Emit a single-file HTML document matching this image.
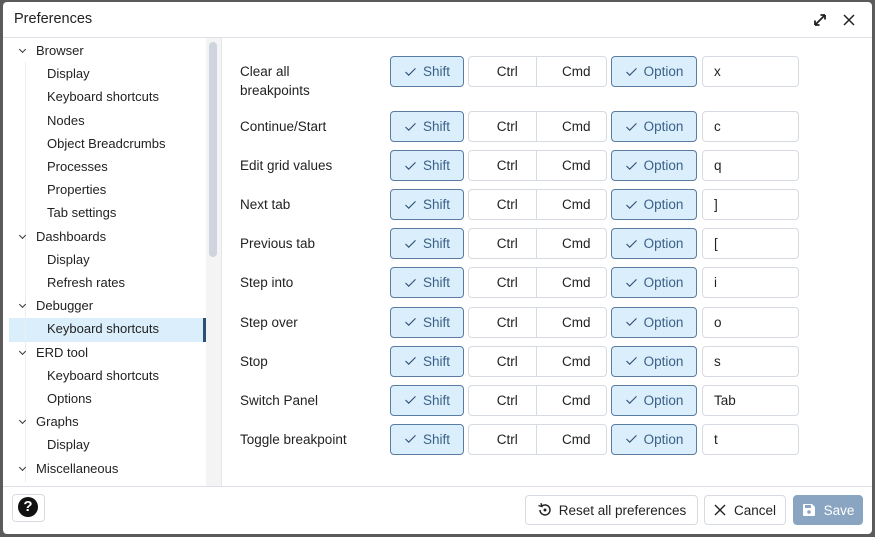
<!DOCTYPE html>
<html><head><style>
*{box-sizing:border-box;margin:0;padding:0}
body{width:875px;height:537px;background:#5b5b5b;font-family:"Liberation Sans",sans-serif;overflow:hidden;position:relative;color:#222}
.dlg{position:absolute;left:3px;top:2px;width:869px;height:532px;background:#fff;border-radius:4px;overflow:hidden}
.a{position:absolute}
.title{left:11px;top:9px;font-size:14.5px;color:#222}
.hdr{left:0;top:35px;width:869px;height:1px;background:#dde0e6}
.ti{position:absolute;font-size:13px;color:#222;white-space:nowrap}
.chev{position:absolute;width:5px;height:5px;border-right:1.2px solid #333;border-bottom:1.2px solid #333;transform:rotate(45deg)}
.btn{position:absolute;height:31px;border:1px solid #d6dbe2;border-radius:4px;font-size:13.5px;display:flex;align-items:center;justify-content:center;color:#222;background:#fff}
.on{background:#dbeefb;border-color:#5a7ca3;color:#3b6188}
.lbl{position:absolute;left:237px;font-size:13.5px;color:#222;line-height:19px}
</style></head><body>
<div class="dlg">
<div class="a title">Preferences</div>
<svg class="a" style="left:809px;top:10px" width="16" height="16" viewBox="0 0 16 16"><path d="M3 13L13 3M3 13V8.5M3 13H7.5M13 3V7.5M13 3H8.5" stroke="#222" stroke-width="1.8" fill="none"/></svg>
<svg class="a" style="left:840px;top:12px" width="12" height="12" viewBox="0 0 12 12"><path d="M1 1L11 11M11 1L1 11" stroke="#222" stroke-width="1.5"/></svg>
<div class="a hdr"></div>
<div class="a" style="left:203px;top:36px;width:15px;height:449px;background:#f4f4f5"></div>
<div class="a" style="left:206px;top:40px;width:8px;height:215px;background:#cfd5de;border-radius:4px"></div>
<div class="a" style="left:218px;top:36px;width:1px;height:449px;background:#e3e6ea"></div>
<div class="a" style="left:6px;top:316px;width:197px;height:24px;background:#dbeefb"></div>
<div class="a" style="left:200px;top:316px;width:3px;height:24px;background:#2f4f75"></div>
<div class="a" style="left:22px;top:60px;width:1px;height:420px;background:#eceef1"></div>
<div id="tree"></div>
<div id="rows"></div>
<div class="a" style="left:0;top:484px;width:869px;height:1px;background:#dde0e6"></div>
<div class="a" style="left:9px;top:492px;width:33px;height:28px;border:1px solid #d6dbe2;border-radius:4px"></div>
<div class="a" style="left:15px;top:495px;width:20px;height:20px;border-radius:50%;background:#111;color:#fff;font-weight:bold;font-size:15px;text-align:center;line-height:20px">?</div>
<div class="btn" style="left:522px;top:493px;width:173px;height:30px;font-size:13.5px"><svg width="16" height="16" viewBox="0 0 16 16" style="margin-right:6px"><path d="M3 8a5 5 0 1 0 1.5-3.6" stroke="#222" stroke-width="1.5" fill="none"/><path d="M1.5 3.5L4.8 4.5L4 1.2" stroke="#222" stroke-width="1.4" fill="none"/><circle cx="8" cy="8" r="1.5" fill="#222"/></svg>Reset all preferences</div>
<div class="btn" style="left:701px;top:493px;width:82px;height:30px"><svg width="12" height="12" viewBox="0 0 12 12" style="margin-right:8px"><path d="M1 1L11 11M11 1L1 11" stroke="#222" stroke-width="1.4"/></svg>Cancel</div>
<div class="btn" style="left:790px;top:493px;width:70px;height:30px;background:#8aa5c2;border-color:#8aa5c2;color:#fff"><svg width="14" height="14" viewBox="0 0 14 14" style="margin-right:8px"><path d="M1 2a1 1 0 0 1 1-1h8l3 3v8a1 1 0 0 1-1 1H2a1 1 0 0 1-1-1z" fill="#fff"/><rect x="3" y="2" width="6" height="3" fill="#8aa5c2"/><circle cx="7" cy="9" r="1.8" fill="#8aa5c2"/></svg>Save</div>
</div>
<script>
var t=[["Browser",0],["Display",1],["Keyboard shortcuts",1],["Nodes",1],["Object Breadcrumbs",1],["Processes",1],["Properties",1],["Tab settings",1],["Dashboards",0],["Display",1],["Refresh rates",1],["Debugger",0],["Keyboard shortcuts",1],["ERD tool",0],["Keyboard shortcuts",1],["Options",1],["Graphs",0],["Display",1],["Miscellaneous",0]];
var h="";t.forEach(function(e,i){var y=41+i*23.2;if(e[1]==0){h+='<div class="chev" style="left:17px;top:'+(y+4)+'px"></div><div class="ti" style="left:33px;top:'+y+'px">'+e[0]+'</div>';}else h+='<div class="ti" style="left:44px;top:'+y+'px">'+e[0]+'</div>';});
document.getElementById("tree").outerHTML=h;
var r=[["Clear all<br>breakpoints","x"],["Continue/Start","c"],["Edit grid values","q"],["Next tab","]"],["Previous tab","["],["Step into","i"],["Step over","o"],["Stop","s"],["Switch Panel","Tab"],["Toggle breakpoint","t"]];
var ck='<svg width="13" height="10" viewBox="0 0 14 11" style="margin-right:6px"><path d="M1.5 5.5L5 9L12.5 1.5" stroke="#2f4f75" stroke-width="1.2" fill="none"/></svg>';
h="";r.forEach(function(e,i){var y=i==0?54:109+(i-1)*39.1;var ly=y+6;
h+='<div class="lbl" style="top:'+ly+'px">'+e[0]+'</div>';
h+='<div class="btn on" style="left:387px;top:'+y+'px;width:74px">'+ck+'Shift</div>';
h+='<div class="btn" style="left:465px;top:'+y+'px;width:139px;justify-content:flex-start"><span style="width:67px;text-align:center;padding-left:10px">Ctrl</span><span style="width:1px;height:29px;background:#d6dbe2"></span><span style="width:70px;text-align:center;padding-left:10px">Cmd</span></div>';
h+='<div class="btn on" style="left:608px;top:'+y+'px;width:86px">'+ck+'Option</div>';
h+='<div class="btn" style="left:699px;top:'+y+'px;width:97px;justify-content:flex-start;padding-left:11px">'+e[1]+'</div>';});
document.getElementById("rows").outerHTML=h;
</script>
</body></html>
